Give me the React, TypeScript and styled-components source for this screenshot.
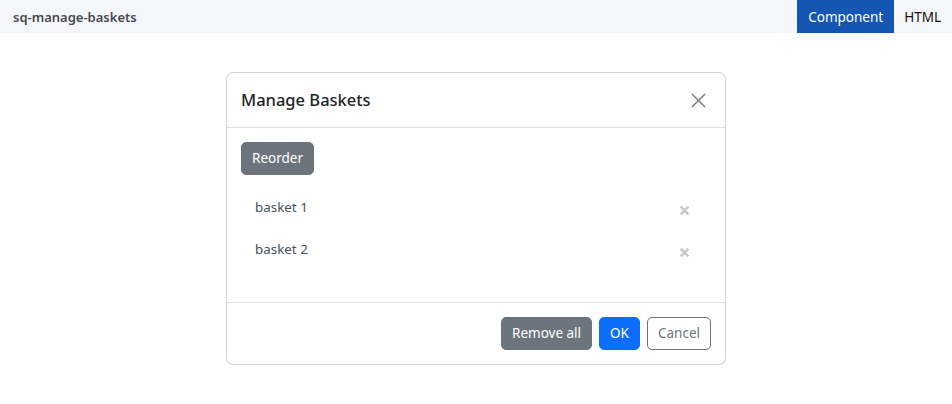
import React from 'react';
import styled, { createGlobalStyle } from 'styled-components';

const GlobalStyle = createGlobalStyle`
  html {
    font-size: 14px;
  }
  body {
    margin: 0;
    background: #fff;
    font-family: 'Noto Sans', 'Open Sans', sans-serif;
    color: #212529;
  }
`;

const TopBar = styled.div`
  display: flex;
  align-items: stretch;
  justify-content: space-between;
  height: 33px;
  background: #f5f6fa;
`;

const DemoName = styled.div`
  display: flex;
  align-items: center;
  padding-left: 13px;
  font-size: 13px;
  font-weight: 600;
  color: #454a50;
`;

const Tabs = styled.div`
  display: flex;
`;

const Tab = styled.div<{ active?: boolean }>`
  display: flex;
  align-items: center;
  padding: 0 ${props => (props.active ? '11px' : '11px 0 10px')};
  font-size: 13.5px;
  background: ${props => (props.active ? '#1456b1' : 'transparent')};
  color: ${props => (props.active ? '#fff' : '#111')};
`;

const Stage = styled.div`
  display: flex;
  justify-content: center;
  padding-top: 39px;
`;

const Modal = styled.div`
  width: 500px;
  box-sizing: border-box;
  border: 1px solid rgba(0, 0, 0, 0.175);
  border-radius: 7px;
  background: #fff;
`;

const Header = styled.div`
  display: flex;
  align-items: center;
  justify-content: space-between;
  padding: 14px;
  border-bottom: 1px solid #dee2e6;
`;

const Title = styled.h5`
  margin: 0;
  font-size: 16.5px;
  font-weight: 500;
  line-height: 26px;
`;

const CloseButton = styled.button`
  display: flex;
  align-items: center;
  justify-content: center;
  width: 18px;
  height: 18px;
  padding: 0;
  margin-right: 4px;
  border: 0;
  background: transparent;
  color: #7a7a7a;
`;

const Body = styled.div`
  padding: 14px;
`;

const Button = styled.button<{ variant: 'secondary' | 'primary' | 'outline' }>`
  font-family: inherit;
  font-size: 13.5px;
  line-height: 21px;
  padding: 5px 10px;
  border-radius: 5px;
  border: 1px solid
    ${props => (props.variant === 'primary' ? '#0d6efd' : '#6c757d')};
  background: ${props =>
    props.variant === 'primary'
      ? '#0d6efd'
      : props.variant === 'secondary'
        ? '#6c757d'
        : '#fff'};
  color: ${props => (props.variant === 'outline' ? '#6c757d' : '#fff')};
`;

const BasketList = styled.div`
  display: flex;
  flex-direction: column;
  padding: 14px 0 15px;
`;

const BasketRow = styled.div`
  display: flex;
  align-items: center;
  justify-content: space-between;
  height: 42px;
  padding: 0 21px 0 14px;
  font-size: 13.4px;
  color: #495057;
`;

const BasketName = styled.span`
  margin-top: -6px;
`;

const RemoveIcon = styled.span`
  display: flex;
  color: #c9c9c9;
`;

const Footer = styled.div`
  display: flex;
  justify-content: flex-end;
  gap: 7px;
  padding: 14px;
  border-top: 1px solid #dee2e6;
`;

const baskets = ['basket 1', 'basket 2'];

function CloseIcon() {
  return (
    <svg width='15' height='15' viewBox='0 0 16 16'>
      <path d='M1 1 L15 15 M15 1 L1 15' stroke='currentColor' strokeWidth='1.6' />
    </svg>
  );
}

function TimesIcon() {
  return (
    <svg width='11' height='11' viewBox='0 0 10 10'>
      <path d='M1.5 1.5 L8.5 8.5 M8.5 1.5 L1.5 8.5' stroke='currentColor' strokeWidth='2.4' />
    </svg>
  );
}

export default function App() {
  return (
    <>
      <GlobalStyle />
      <TopBar>
        <DemoName>sq-manage-baskets</DemoName>
        <Tabs>
          <Tab active>Component</Tab>
          <Tab>HTML</Tab>
        </Tabs>
      </TopBar>
      <Stage>
        <Modal>
          <Header>
            <Title>Manage Baskets</Title>
            <CloseButton type='button'>
              <CloseIcon />
            </CloseButton>
          </Header>
          <Body>
            <Button variant='secondary'>Reorder</Button>
            <BasketList>
              {baskets.map(name => (
                <BasketRow key={name}>
                  <BasketName>{name}</BasketName>
                  <RemoveIcon>
                    <TimesIcon />
                  </RemoveIcon>
                </BasketRow>
              ))}
            </BasketList>
          </Body>
          <Footer>
            <Button variant='secondary'>Remove all</Button>
            <Button variant='primary'>OK</Button>
            <Button variant='outline'>Cancel</Button>
          </Footer>
        </Modal>
      </Stage>
    </>
  );
}
